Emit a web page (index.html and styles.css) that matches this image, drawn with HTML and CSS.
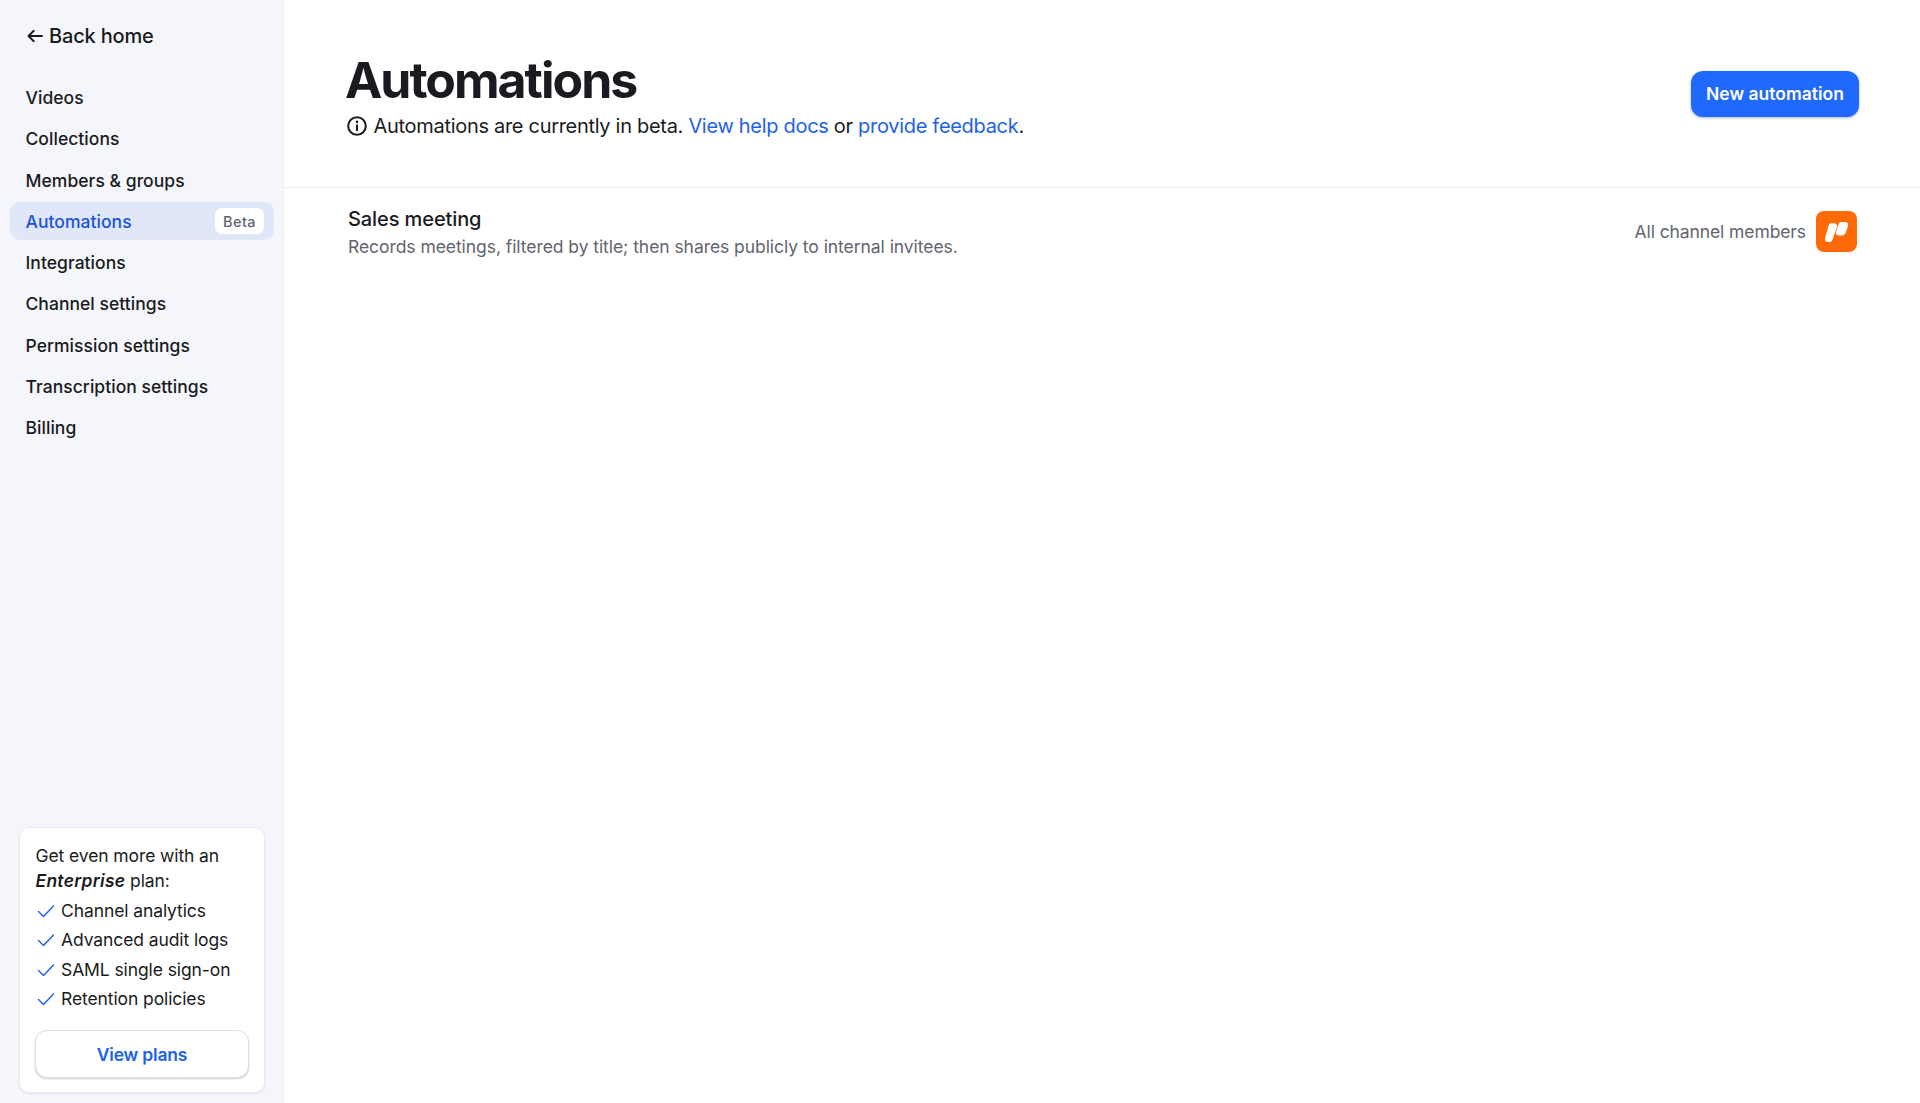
FILE: index.html
```html
<!DOCTYPE html>
<html lang="en">
<head>
<meta charset="utf-8">
<title>Automations</title>
<link rel="stylesheet" href="styles.css">
</head>
<body>
<div class="app">
  <aside class="sidebar">
    <a class="back">
      <svg class="back-icon" viewBox="0 0 18 18" fill="none" stroke="currentColor" stroke-width="1.9" stroke-linecap="round" stroke-linejoin="round"><path d="M16 9H2.5M7.8 3.8 2.5 9l5.3 5.2"/></svg>
      <span>Back home</span>
    </a>
    <nav class="nav">
      <a class="nav-item">Videos</a>
      <a class="nav-item">Collections</a>
      <a class="nav-item">Members &amp; groups</a>
      <a class="nav-item active">Automations <span class="badge">Beta</span></a>
      <a class="nav-item">Integrations</a>
      <a class="nav-item">Channel settings</a>
      <a class="nav-item">Permission settings</a>
      <a class="nav-item">Transcription settings</a>
      <a class="nav-item">Billing</a>
    </nav>
    <div class="upsell">
      <p class="upsell-title">Get even more with an <em>Enterprise</em> plan:</p>
      <ul class="features">
        <li><svg class="check" viewBox="0 0 18 18" fill="none" stroke="currentColor" stroke-width="1.4" stroke-linecap="round" stroke-linejoin="round"><path d="M1.5 9.5 6.5 14.5 16.5 4"/></svg>Channel analytics</li>
        <li><svg class="check" viewBox="0 0 18 18" fill="none" stroke="currentColor" stroke-width="1.4" stroke-linecap="round" stroke-linejoin="round"><path d="M1.5 9.5 6.5 14.5 16.5 4"/></svg>Advanced audit logs</li>
        <li><svg class="check" viewBox="0 0 18 18" fill="none" stroke="currentColor" stroke-width="1.4" stroke-linecap="round" stroke-linejoin="round"><path d="M1.5 9.5 6.5 14.5 16.5 4"/></svg>SAML single sign-on</li>
        <li><svg class="check" viewBox="0 0 18 18" fill="none" stroke="currentColor" stroke-width="1.4" stroke-linecap="round" stroke-linejoin="round"><path d="M1.5 9.5 6.5 14.5 16.5 4"/></svg>Retention policies</li>
      </ul>
      <a class="plans-btn">View plans</a>
    </div>
  </aside>
  <main class="main">
    <header class="header">
      <div class="heading">
        <h1 class="title">Automations</h1>
        <p class="subtitle">
          <svg class="info" viewBox="0 0 20 20" fill="none" stroke="currentColor" stroke-width="2" stroke-linecap="round"><circle cx="10" cy="10" r="8.8"/><path d="M10 9.2v5"/><path d="M10 5.8v.3" stroke-width="2.4"/></svg>
          <span>Automations are currently in beta. <a class="link">View help docs</a> or <a class="link">provide feedback</a>.</span>
        </p>
      </div>
      <button class="primary-btn" type="button">New automation</button>
    </header>
    <section class="row">
      <div class="row-text">
        <div class="row-title">Sales meeting</div>
        <div class="row-desc">Records meetings, filtered by title; then shares publicly to internal invitees.</div>
      </div>
      <div class="row-meta">
        <span class="audience">All channel members</span>
        <span class="logo">
          <svg viewBox="0 0 41 41" width="41" height="41" fill="#fff" stroke="#fff" stroke-width="6.4" stroke-linejoin="round"><path d="M15.6 15.5h2.2L13.4 27.8h-1.2z"/><path d="M25.6 14.2h3.4l-2.6 7h-3.2z"/></svg>
        </span>
      </div>
    </section>
  </main>
</div>
</body>
</html>
```
FILE: styles.css
```css
* { box-sizing: border-box; }
html, body { height: 100%; }
body {
  margin: 0;
  background: #fff;
  color: #1a1b20;
  font-family: Inter, "Liberation Sans", sans-serif;
  overflow: hidden;
}
p, ul, h1 { margin: 0; padding: 0; }
.app { display: flex; height: 1103px; }

.sidebar {
  width: 284px;
  flex: none;
  background: #f4f6fb;
  border-right: 1px solid #eff1f5;
  display: flex;
  flex-direction: column;
  padding: 23px 9px 10px 10px;
}
.back {
  display: flex;
  align-items: center;
  gap: 5px;
  height: 26px;
  padding-left: 16px;
  font-size: 20px;
  font-weight: 500;
  letter-spacing: -0.17px;
}
.back-icon { width: 18px; height: 18px; flex: none; }
.nav {
  display: flex;
  flex-direction: column;
  gap: 3.25px;
  margin-top: 29.5px;
}
.nav-item {
  display: flex;
  align-items: center;
  justify-content: space-between;
  height: 38px;
  padding: 0 10px 0 15.5px;
  border-radius: 10px;
  font-size: 17.5px;
  font-weight: 500;
  letter-spacing: 0.04px;
}
.nav-item.active { background: #dfe7f9; color: #1b53dc; }
.badge {
  display: flex;
  align-items: center;
  height: 26px;
  padding: 0 8px;
  border-radius: 7px;
  background: #fff;
  color: #62646f;
  font-size: 14.5px;
  letter-spacing: 0.4px;
}

.upsell {
  margin: auto 9px 0;
  width: 246px;
  height: 266px;
  background: #fff;
  border: 1px solid #e8eaef;
  border-radius: 10px;
  box-shadow: 0 1px 2px rgba(20, 25, 40, 0.08);
  padding: 15px 15px 14px;
  display: flex;
  flex-direction: column;
  font-size: 17.5px;
  letter-spacing: -0.1px;
}
.upsell-title { line-height: 25px; padding-left: 0.5px; }
.upsell-title em { font-weight: 600; letter-spacing: 0.25px; }
.features { list-style: none; margin-top: 3px; }
.features li {
  display: flex;
  align-items: center;
  height: 29.3px;
}
.check { width: 18px; height: 18px; margin: 1px 6px 0 2px; color: #1d5fe0; flex: none; }
.plans-btn {
  margin-top: auto;
  height: 48px;
  display: flex;
  align-items: center;
  justify-content: center;
  background: #fff;
  border: 1px solid #dfe1e7;
  border-radius: 12px;
  box-shadow: 0 1px 2px rgba(20, 25, 40, 0.22);
  color: #1d62e6;
  font-size: 17.5px;
  font-weight: 600;
  letter-spacing: -0.2px;
}

.main { flex: 1; min-width: 0; }
.header {
  height: 188px;
  border-bottom: 1px solid #e9eaee;
  padding: 49px 61px 0 61px;
  display: flex;
  justify-content: space-between;
  align-items: flex-start;
}
.title {
  font-size: 50px;
  line-height: 62px;
  font-weight: 700;
  letter-spacing: -2px;
  color: #1a1b20;
}
.subtitle {
  display: flex;
  align-items: center;
  gap: 7px;
  margin-top: -0.5px;
  padding-left: 1.5px;
  font-size: 20px;
  line-height: 30px;
  letter-spacing: -0.3px;
}
.info { width: 20px; height: 20px; flex: none; }
.link { color: #1d62e6; }
.primary-btn {
  margin-top: 21.5px;
  width: 168px;
  height: 46px;
  border: 0;
  border-radius: 12px;
  background: #1f69ff;
  box-shadow: 0 1px 3px rgba(20, 50, 120, 0.35);
  color: #fff;
  font-family: inherit;
  font-size: 17.5px;
  font-weight: 600;
  padding: 0;
}
.row {
  display: flex;
  justify-content: space-between;
  align-items: center;
  height: 88px;
  padding: 2px 63px 0 64px;
}
.row-title { font-size: 20px; font-weight: 500; line-height: 28px; letter-spacing: -0.1px; }
.row-desc { font-size: 17.5px; line-height: 28px; color: #62646f; letter-spacing: -0.06px; }
.row-meta { display: flex; align-items: center; gap: 10px; margin-top: -4px; }
.audience { font-size: 17.5px; color: #62646f; letter-spacing: -0.1px; }
.logo {
  width: 41px;
  height: 41px;
  border-radius: 8px;
  background: #ff6a09;
  display: flex;
  align-items: center;
  justify-content: center;
}
```
